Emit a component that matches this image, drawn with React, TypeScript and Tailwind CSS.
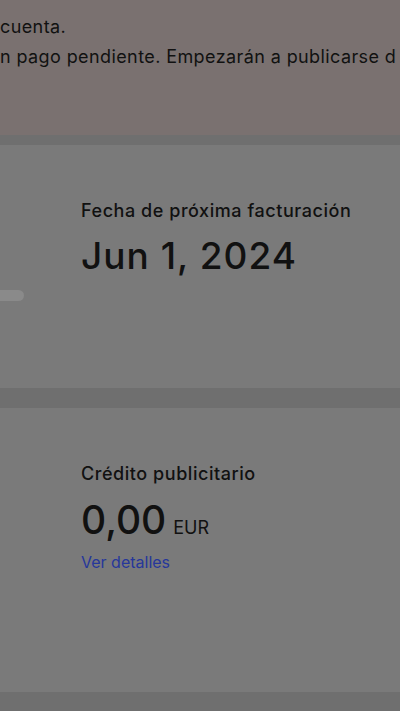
import React from "react";

const BillingOverview: React.FC = () => {
    return (
        <div className="w-[400px] h-[711px] overflow-hidden bg-[#6f6f6f] text-[#111111]" style={{ fontFamily: "Inter, 'Noto Sans', sans-serif" }}>

            {/* aviso de pago */}
            <div className="h-[135px] bg-[#7a7170] pt-[15px] overflow-hidden whitespace-nowrap">
                <p className="text-[18px] leading-6 tracking-[0.4px]">cuenta.</p>
                <p className="text-[18px] leading-6 tracking-[0.4px] mt-[6px]">n pago pendiente. Empezarán a publicarse d</p>
            </div>

            <div className="flex flex-col gap-[20px] mt-[10px]">

                {/* facturación */}
                <div className="h-[243px] bg-[#7a7a7a] flex">
                    <div className="w-[24px] pt-[145px]">
                        <div className="h-[11px] w-[24px] rounded-r-full bg-[#8a8a8a]"></div>
                    </div>
                    <div className="ml-[57px] pt-[54px] flex flex-col">
                        <span className="text-[18px] leading-6 font-medium tracking-[0.55px]">Fecha de próxima facturación</span>
                        <span className="text-[37px] leading-[44px] font-medium tracking-[1px] mt-[11px]">Jun 1, 2024</span>
                    </div>
                </div>

                {/* crédito */}
                <div className="h-[284px] bg-[#7a7a7a] pl-[81px] pt-[54px] flex flex-col">
                    <span className="text-[18px] leading-6 font-medium tracking-[0.55px]">Crédito publicitario</span>
                    <div className="flex items-baseline gap-[7px] mt-[11px]">
                        <span className="text-[39px] leading-[46px] font-medium">0,00</span>
                        <span className="text-[18px] leading-6">EUR</span>
                    </div>
                    <a className="text-[16px] leading-6 text-[#26379a] mt-[7px] w-fit">Ver detalles</a>
                </div>

            </div>
        </div>
    );
};

export default function App() {
    return <BillingOverview />;
}
